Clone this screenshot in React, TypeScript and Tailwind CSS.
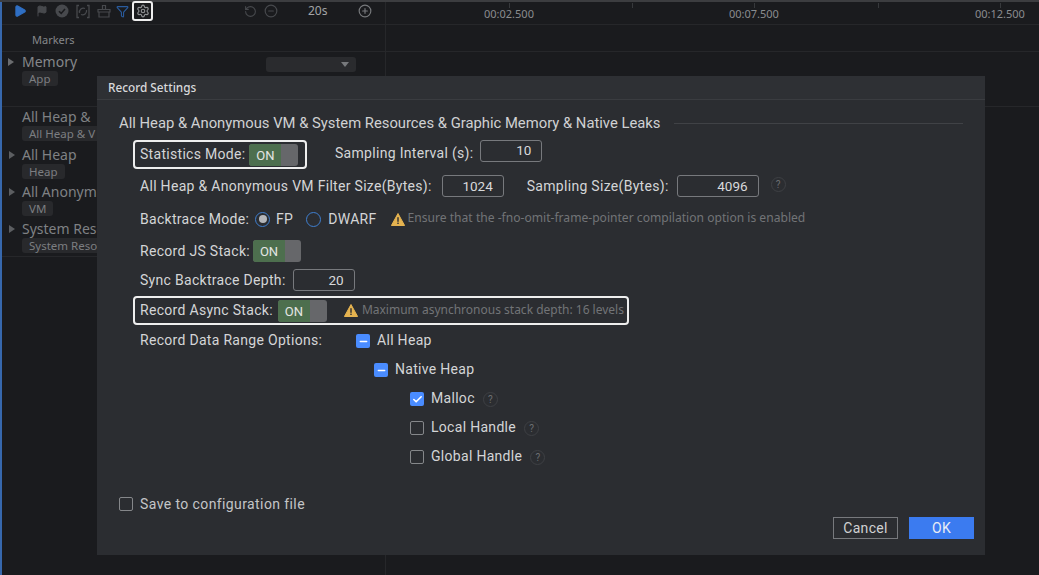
import React from 'react';
import { Settings, Flag, Funnel, Play, RotateCcw, CircleMinus, CirclePlus, Check, Minus } from 'lucide-react';

const Toggle: React.FC<{ className?: string }> = ({ className = 'w-[49px]' }) => (
  <div className={`flex h-[22px] shrink-0 overflow-hidden rounded-[3px] bg-[#66676a] ${className}`}>
    <div className="flex w-[32px] items-center justify-center bg-[#4d6f4e] pt-[2px] text-[13px] tracking-normal text-[#e4e6e4]">ON</div>
  </div>
);

const NumberInput: React.FC<{ value: string; className: string }> = ({ value, className }) => (
  <div className={`flex h-[22px] shrink-0 items-center justify-end rounded-[3px] border border-[#77797d] pr-[10px] text-[13.5px] tracking-normal text-[#d8d9db] ${className}`}>
    {value}
  </div>
);

const Radio: React.FC<{ checked?: boolean }> = ({ checked }) => (
  <span className="flex h-[15px] w-[15px] items-center justify-center rounded-full border border-[#3f7fd0]">
    {checked && <span className="h-[8px] w-[8px] rounded-full bg-[#b4b6ba]" />}
  </span>
);

const Box: React.FC<{ state?: 'minus' | 'check' }> = ({ state }) =>
  state ? (
    <span className="flex h-[14px] w-[14px] items-center justify-center rounded-[2px] bg-[#4a8cff] text-white">
      {state === 'minus' ? <Minus size={11} strokeWidth={3} /> : <Check size={11} strokeWidth={3.5} />}
    </span>
  ) : (
    <span className="h-[14px] w-[14px] rounded-[2px] border border-[#85878a]" />
  );

const Help: React.FC = () => (
  <span className="flex h-[15px] w-[15px] items-center justify-center rounded-full border border-[#3e4044] text-[10px] tracking-normal text-[#6d6f72]">?</span>
);

const Warn: React.FC = () => (
  <svg width="14" height="13" viewBox="0 0 14 13">
    <path d="M7 0.5 L13.6 12.5 L0.4 12.5 Z" fill="#e5b350" stroke="#e5b350" strokeLinejoin="round" />
    <rect x="6.3" y="4.2" width="1.4" height="4.6" fill="#2b2d31" />
    <rect x="6.3" y="9.6" width="1.4" height="1.4" fill="#2b2d31" />
  </svg>
);

const tracks = [
  { name: 'All Heap &', tag: 'All Heap & V', arrow: false, height: 'h-[38px]' },
  { name: 'All Heap', tag: 'Heap', arrow: true, height: 'h-[37px]' },
  { name: 'All Anonym', tag: 'VM', arrow: true, height: 'h-[37px]' },
  { name: 'System Rese', tag: 'System Reso', arrow: true, height: 'h-[37px]' },
];

export default function App() {
  return (
    <div className="relative h-[575px] w-[1039px] overflow-hidden bg-[#1a1b1e] font-['Noto_Sans',sans-serif] text-[#d4d5d7]">
      <div className="h-[2px] bg-[#3c3d40]" />
      <div className="flex h-[573px] border-l-[2px] border-[#3768ad]">
        <div className="w-[383px] shrink-0">
          {/* toolbar */}
          <div className="flex h-[23px] items-center border-b border-[#26272a] pb-[4px] text-[#47494d]">
            <Play size={14} className="ml-[11px] fill-[#2f6fc4] text-[#2f6fc4]" />
            <Flag size={12} className="ml-[9px] fill-[#47494d]" />
            <svg width="14" height="14" viewBox="0 0 14 14" className="ml-[7px]">
              <circle cx="7" cy="7" r="6.5" fill="#47494d" />
              <path d="M4 7.2 L6.2 9.4 L10 5" fill="none" stroke="#1a1b1e" strokeWidth="1.6" />
            </svg>
            <svg width="16" height="15" viewBox="0 0 16 15" className="ml-[6px]" fill="none" stroke="currentColor" strokeWidth="1.3">
              <path d="M4 1.5H2V13.5H4M12 1.5H14V13.5H12M10 4.5A4 4 0 0 0 4.5 9M6 10.5A4 4 0 0 0 11.5 6" />
            </svg>
            <svg width="14" height="14" viewBox="0 0 14 14" className="ml-[6px]" fill="none" stroke="currentColor" strokeWidth="1.2">
              <path d="M5.5 5V1.5H8.5V5M1 5.5H13V8H1ZM2 8V13H12V8" />
            </svg>
            <Funnel size={13} className="ml-[5px] text-[#2a5c9f]" />
            <span className="ml-[3px] flex h-[20px] w-[21px] items-center justify-center rounded-[3px] border-2 border-[#eeeeee] text-[#8d8f92]">
              <Settings size={14} />
            </span>
            <RotateCcw size={13} className="ml-[91px]" />
            <CircleMinus size={14} className="ml-[7px]" />
            <span className="ml-[30px] text-[12px] text-[#a2a4a6]">20s</span>
            <CirclePlus size={14} className="ml-[31px] text-[#77797c]" />
          </div>
          <div className="flex h-[27px] items-center border-b border-[#26272a] pl-[30px] pt-[5px] text-[11px] text-[#85878a]">Markers</div>
          {/* memory row */}
          <div className="relative h-[55px] border-b border-[#26272a] pl-[20px] pt-[1px]">
            <span className="absolute left-[6px] top-[6px] h-0 w-0 border-y-[4px] border-l-[6px] border-y-transparent border-l-[#6a6c6f]" />
            <div className="text-[14px] leading-[18px] text-[#85878a]">Memory</div>
            <div className="w-fit rounded-[3px] bg-[#28292c] px-[7px] text-[11.5px] leading-[15px] text-[#7c7e81]">App</div>
            <div className="absolute left-[264px] top-[5px] flex h-[15px] w-[90px] items-center justify-end rounded-[3px] bg-[#2a2b2e] pr-[7px]">
              <span className="h-0 w-0 border-x-[4px] border-t-[5px] border-x-transparent border-t-[#77797c]" />
            </div>
          </div>
          {tracks.map((t) => (
            <div key={t.name} className={`relative overflow-hidden pl-[20px] pt-[1px] ${t.height}`}>
              {t.arrow && <span className="absolute left-[7px] top-[6px] h-0 w-0 border-y-[4px] border-l-[6px] border-y-transparent border-l-[#5c5e61]" />}
              <div className="whitespace-nowrap text-[14px] leading-[18px] text-[#7f8184]">{t.name}</div>
              <div className="w-fit whitespace-nowrap rounded-[3px] bg-[#28292c] px-[7px] text-[11.5px] leading-[15px] text-[#7c7e81]">{t.tag}</div>
            </div>
          ))}
          <div className="border-b border-[#26272a]" />
        </div>
        {/* timeline */}
        <div className="flex-1 border-l border-[#26272a]">
          <div className="relative flex h-[23px] items-center border-b border-[#26272a] pt-[3px] text-[11px] text-[#8a8c8f]">
            <span className="ml-[98px]">00:02.500</span>
            <span className="ml-[195px]">00:07.500</span>
            <span className="ml-[196px]">00:12.500</span>
            <div className="absolute left-0 top-[1px] flex">
              <span className="ml-[123px] h-[5px] w-px bg-[#37393c]" />
              <span className="ml-[122px] h-[5px] w-px bg-[#37393c]" />
              <span className="ml-[121px] h-[5px] w-px bg-[#37393c]" />
              <span className="ml-[123px] h-[5px] w-px bg-[#37393c]" />
              <span className="ml-[121px] h-[5px] w-px bg-[#37393c]" />
            </div>
          </div>
          <div className="h-[27px] border-b border-[#26272a]" />
          <div className="h-[55px] border-b border-[#26272a]" />
        </div>
      </div>

      {/* Record Settings dialog */}
      <div className="absolute left-[97px] top-[76px] flex h-[479px] w-[888px] flex-col whitespace-nowrap bg-[#2b2d31] font-['Roboto',sans-serif] text-[14px] tracking-[0.3px]">
        <div className="flex h-[24px] shrink-0 items-center border-b border-[#3a3c40] bg-[#2e3034] pl-[11px] pt-[1px] font-['Noto_Sans',sans-serif] text-[11.8px] font-medium tracking-normal text-[#d8d9db]">Record Settings</div>
        <div className="flex-1 pl-[43px]">
          <div className="-ml-[21px] mt-[13px] flex h-[20px] items-center pr-[22px] text-[14.8px] tracking-normal text-[#d0d1d3]">
            <span>All Heap &amp; Anonymous VM &amp; System Resources &amp; Graphic Memory &amp; Native Leaks</span>
            <span className="ml-[14px] h-px flex-1 bg-[#404246]" />
          </div>

          <div className="mt-[7px] flex h-[29px] items-center">
            <div className="-ml-[7px] flex h-[29px] w-[174px] shrink-0 items-center gap-[4px] rounded-[4px] border-2 border-[#eeeeee] pl-[5px]">
              <span>Statistics Mode:</span>
              <Toggle />
            </div>
            <span className="ml-[28px] -translate-y-px">Sampling Interval (s):</span>
            <NumberInput value="10" className="ml-[7px] w-[62px] -translate-y-[4px]" />
          </div>

          <div className="mt-[6px] flex h-[22px] items-center">
            <span>All Heap &amp; Anonymous VM Filter Size(Bytes):</span>
            <NumberInput value="1024" className="ml-[10px] w-[62px]" />
            <span className="ml-[23px]">Sampling Size(Bytes):</span>
            <NumberInput value="4096" className="ml-[8px] w-[82px]" />
            <span className="ml-[12px] -translate-y-[2px]"><Help /></span>
          </div>

          <div className="mt-[12px] flex h-[20px] items-center">
            <span>Backtrace Mode:</span>
            <span className="ml-[6px]"><Radio checked /></span>
            <span className="ml-[6px]">FP</span>
            <span className="ml-[13px]"><Radio /></span>
            <span className="ml-[7px]">DWARF</span>
            <span className="ml-[14px] mr-[3px]"><Warn /></span>
            <span className="-translate-y-px font-['Noto_Sans',sans-serif] text-[12.1px] tracking-normal text-[#727477]">Ensure that the -fno-omit-frame-pointer compilation option is enabled</span>
          </div>

          <div className="mt-[11px] flex h-[22px] items-center gap-[3px]">
            <span>Record JS Stack:</span>
            <Toggle className="w-[48px]" />
          </div>

          <div className="mt-[7px] flex h-[22px] items-center gap-[7px]">
            <span>Sync Backtrace Depth:</span>
            <NumberInput value="20" className="w-[62px]" />
          </div>

          <div className="-ml-[7px] mt-[5px] flex h-[29px] w-[496px] items-center rounded-[4px] border-2 border-[#eeeeee] pl-[5px]">
            <span>Record Async Stack:</span>
            <Toggle className="ml-[5px] w-[49px]" />
            <span className="ml-[17px] mr-[4px]"><Warn /></span>
            <span className="-translate-y-px font-['Noto_Sans',sans-serif] text-[12px] tracking-normal text-[#727477]">Maximum asynchronous stack depth: 16 levels</span>
          </div>

          <div className="mt-[5px] flex h-[22px] items-center">
            <span className="w-[216px] -translate-y-px">Record Data Range Options:</span>
            <Box state="minus" />
            <span className="ml-[7px] -translate-y-px">All Heap</span>
          </div>
          <div className="mt-[7px] flex h-[22px] items-center pl-[234px]">
            <Box state="minus" />
            <span className="ml-[7px] -translate-y-px">Native Heap</span>
          </div>
          <div className="mt-[7px] flex h-[22px] items-center pl-[270px]">
            <Box state="check" />
            <span className="ml-[7px] -translate-y-px">Malloc</span>
            <span className="ml-[8px]"><Help /></span>
          </div>
          <div className="mt-[7px] flex h-[22px] items-center pl-[270px]">
            <Box />
            <span className="ml-[7px] -translate-y-px">Local Handle</span>
            <span className="ml-[8px]"><Help /></span>
          </div>
          <div className="mt-[7px] flex h-[22px] items-center pl-[270px]">
            <Box />
            <span className="ml-[7px] -translate-y-px">Global Handle</span>
            <span className="ml-[8px]"><Help /></span>
          </div>

          <div className="-ml-[21px] mt-[25px] flex h-[22px] items-center">
            <Box />
            <span className="ml-[7px] tracking-[0.4px] text-[#c4c5c7]">Save to configuration file</span>
          </div>
        </div>
        <div className="mb-[16px] mr-[11px] flex justify-end gap-[11px]">
          <button className="h-[22px] w-[65px] border border-[#77797d] text-[14px] text-[#d0d1d3]">Cancel</button>
          <button className="h-[22px] w-[65px] bg-[#3b7bf0] text-[14px] text-[#e8ecf5]">OK</button>
        </div>
      </div>
    </div>
  );
}
